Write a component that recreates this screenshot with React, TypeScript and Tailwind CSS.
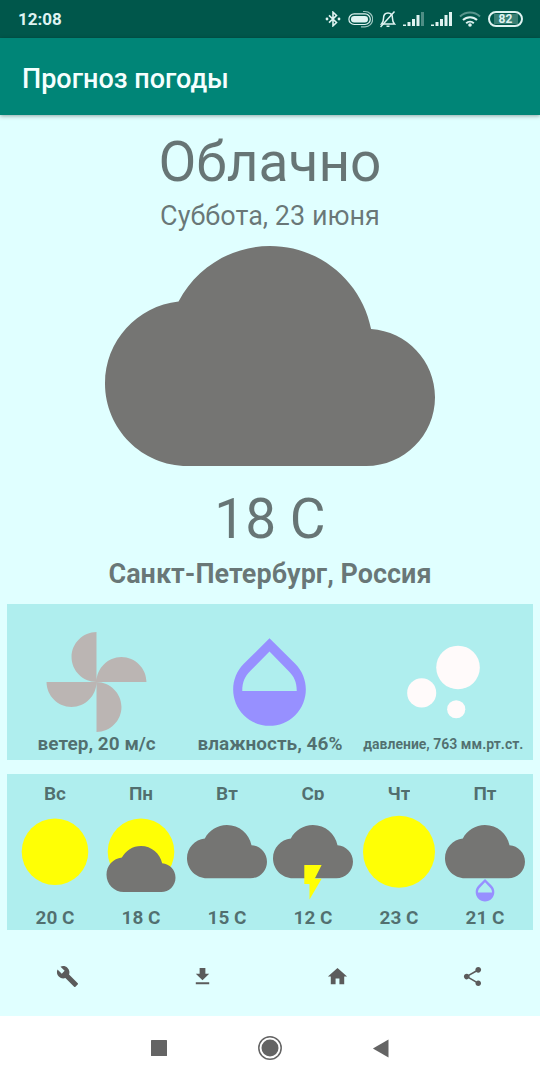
import type { ReactNode } from "react";

const CLOUD =
  "M19.35 10.04C18.67 6.59 15.64 4 12 4 9.11 4 6.6 5.64 5.35 8.04 2.34 8.36 0 10.91 0 14c0 3.31 2.69 6 6 6h13c2.76 0 5-2.24 5-5 0-2.64-2.05-4.78-4.65-4.96z";
const DROP =
  "M17.66 8L12 2.35 6.34 8C4.78 9.56 4 11.64 4 13.64s.78 4.11 2.34 5.67 3.61 2.35 5.66 2.35 4.1-.79 5.66-2.35S20 15.64 20 13.64 19.22 9.56 17.66 8zM6 14c.01-2 .62-3.27 1.76-4.4L12 5.27l4.24 4.38C17.38 10.77 17.99 12 18 14H6z";
const FAN =
  "M12 12c0-3 2.5-5.5 5.5-5.5S23 9 23 12H12zm0 0c0 3-2.5 5.5-5.5 5.5S1 15 1 12h11zm0 0c-3 0-5.5-2.5-5.5-5.5S9 1 12 1v11zm0 0c3 0 5.5 2.5 5.5 5.5S15 23 12 23V12z";
const BOLT = "M7 2v11h3v9l7-12h-4l4-8z";

function StatusBar() {
  return (
    <div className="flex h-[38px] items-center justify-between bg-[#00574b] pl-[18px] pr-[17px] text-[#dff3f1]">
      <time className="text-[17px] leading-5 font-bold">12:08</time>
      <div className="flex items-center gap-[7px]">
        <svg className="h-4 w-4" viewBox="0 0 16 16" fill="none" stroke="currentColor" strokeWidth="1.6" aria-label="Bluetooth">
          <path d="M4 4.3l7.5 7.2L8 14.8V1.2l3.5 3.3L4 11.7" />
          <circle cx="2" cy="8" r="1.4" fill="currentColor" stroke="none" />
          <circle cx="14" cy="8" r="1.4" fill="currentColor" stroke="none" />
        </svg>
        <svg className="h-[18px] w-[25px]" viewBox="0 0 25 18" fill="none" stroke="currentColor" aria-label="VPN">
          <rect x="3" y="6" width="17" height="6.5" rx="3.2" fill="currentColor" stroke="none" />
          <path d="M17 14.5H6.2a5.3 5.3 0 0 1 0-10.6H17a5.3 5.3 0 0 1 0 10.6" strokeWidth="1.2" />
          <path d="M15 1.5h2a7.4 7.4 0 0 1 0 15.3h-4" strokeWidth="1.2" opacity=".7" />
        </svg>
        <svg className="h-[18px] w-4" viewBox="1 0 16 18" fill="none" stroke="currentColor" strokeWidth="1.5" aria-label="Без звука">
          <path d="M2.5 14h13c-1.5-1.5-2-2.5-2-5.5C13.5 5 12 3 9 3S4.5 5 4.5 8.5c0 3-.5 4-2 5.5z" />
          <path d="M7.5 16.3h3M1.500 17l14-15.5" />
        </svg>
        <SignalBars weak />
        <SignalBars />
        <svg className="h-4 w-[22px]" viewBox="0 0 22 16" fill="none" stroke="currentColor" strokeWidth="2" aria-label="Wi-Fi">
          <path d="M1 5.500a14.500 14.500 0 0 1 20 0" opacity=".4" />
          <path d="M4 9a10 10 0 0 1 14 0M7.2 12.200a5.600 5.600 0 0 1 7.600 0" />
          <circle cx="11" cy="14" r="1.8" fill="currentColor" stroke="none" />
        </svg>
        <div className="flex h-4 w-[35px] items-center justify-center rounded-full border-2 border-current">
          <span className="w-6 bg-[#3a7f74] text-center text-[12px] leading-[10px] font-bold">82</span>
        </div>
      </div>
    </div>
  );
}

function SignalBars({ weak = false }: { weak?: boolean }) {
  return (
    <svg className="h-4 w-[21px]" viewBox="0 0 21 16" fill="currentColor" aria-label="Сигнал сети">
      <path d="M0 13.5h3V15H0zM4.5 11h3v4h-3zM9 8h3v7H9zM13.5 4h3v11h-3z" />
      <path d="M18 1h3v14h-3z" opacity={weak ? 0.35 : 1} />
    </svg>
  );
}

function Metric({ label, small = false, children }: { label: string; small?: boolean; children: ReactNode }) {
  return (
    <div className="flex min-w-0 flex-col items-center">
      <svg className="h-[100px] w-[109px]" viewBox="0 1 24 22">
        {children}
      </svg>
      <p className={`mt-px whitespace-nowrap leading-[22px] font-bold ${small ? "text-[14px]" : "text-[19px]"}`}>{label}</p>
    </div>
  );
}

type Sky = "sun" | "partly" | "cloud" | "storm" | "clear" | "rain";

function SkyIcon({ sky }: { sky: Sky }) {
  return (
    <svg className="mt-2 h-[98px] w-[86px]" viewBox="0 0 86 98">
      {(sky === "sun" || sky === "partly") && <circle cx="43" cy="43.7" r="33.3" fill="#ffff05" />}
      {sky === "clear" && <circle cx="43" cy="43.7" r="36" fill="#ffff05" />}
      {sky === "partly" && <path d={CLOUD} fill="#757573" transform="translate(8.5 26.5) scale(2.875)" />}
      {(sky === "cloud" || sky === "storm" || sky === "rain") && (
        <path d={CLOUD} fill="#757573" transform="translate(3 3.7) scale(3.333)" />
      )}
      {sky === "storm" && <path d={BOLT} fill="#ffff05" transform="translate(22.2 53.5) scale(1.73)" />}
      {sky === "rain" && <path d={DROP} fill="#9790ff" transform="translate(29 68.2) scale(1.167)" />}
    </svg>
  );
}

const days: { name: string; temp: string; sky: Sky }[] = [
  { name: "Вс", temp: "20 C", sky: "sun" },
  { name: "Пн", temp: "18 C", sky: "partly" },
  { name: "Вт", temp: "15 C", sky: "cloud" },
  { name: "Ср", temp: "12 C", sky: "storm" },
  { name: "Чт", temp: "23 C", sky: "clear" },
  { name: "Пт", temp: "21 C", sky: "rain" },
];

const actions = [
  {
    label: "Настройки",
    path: "M22.7 19l-9.1-9.1c.9-2.3.4-5-1.5-6.9-2-2-5-2.4-7.4-1.3L9 6 6 9 1.6 4.7C.4 7.1.9 10.1 2.9 12.1c1.9 1.9 4.6 2.4 6.9 1.5l9.1 9.1c.4.4 1 .4 1.4 0l2.3-2.3c.5-.4.5-1.1.1-1.4z",
  },
  { label: "Загрузить", path: "M19 9h-4V3H9v6H5l7 7 7-7zM5 18v2h14v-2H5z" },
  { label: "Главная", path: "M10 20v-6h4v6h5v-8h3L12 3 2 12h3v8z" },
  {
    label: "Поделиться",
    path: "M18 16.08c-.76 0-1.44.3-1.96.77L8.91 12.7c.05-.23.09-.46.09-.7s-.04-.47-.09-.7l7.05-4.11c.54.5 1.25.81 2.04.81 1.66 0 3-1.34 3-3s-1.34-3-3-3-3 1.34-3 3c0 .24.04.47.09.7L8.04 9.81C7.5 9.31 6.79 9 6 9c-1.66 0-3 1.34-3 3s1.34 3 3 3c.79 0 1.5-.31 2.04-.81l7.12 4.16c-.05.21-.08.43-.08.65 0 1.61 1.31 2.92 2.92 2.92 1.61 0 2.92-1.31 2.92-2.92s-1.31-2.92-2.92-2.92z",
  },
];

export default function App() {
  return (
    <div className="flex min-h-screen flex-col bg-[#e0ffff] font-['Roboto',sans-serif] text-black/54">
      <StatusBar />
      <header className="flex h-[77px] items-center bg-[#008577] px-[22px] pt-1 shadow-[0_1px_4px_rgba(0,0,0,0.35)]">
        <h1 className="text-[27px] leading-8 font-medium text-[#f5fffe]">Прогноз погоды</h1>
      </header>

      <main className="flex flex-1 flex-col px-[7px]">
        <section className="flex flex-col items-center pt-[15px] text-center">
          <h2 className="text-[55px] leading-16">Облачно</h2>
          <p className="mt-[6px] text-[27px] leading-8">Суббота, 23 июня</p>
          <svg className="mt-[14px] h-[220px] w-[330px]" viewBox="0 4 24 16">
            <path d={CLOUD} fill="#757573" />
          </svg>
          <p className="mt-[21px] text-[55px] leading-16">18 C</p>
          <p className="mt-[7px] text-[27px] leading-8 font-bold">Санкт-Петербург, Россия</p>
        </section>

        <section className="mt-[14px] grid grid-cols-3 bg-[#afeeee] px-[3px] pt-7 pb-[5px]">
          <Metric label="ветер, 20 м/с">
            <path d={FAN} fill="#bbb5b3" />
          </Metric>
          <Metric label="влажность, 46%">
            <path d={DROP} fill="#9790ff" />
          </Metric>
          <Metric label="давление, 763 мм.рт.ст." small>
            <g fill="#fffafa">
              <circle cx="7.2" cy="14.4" r="3.2" />
              <circle cx="14.8" cy="18" r="2" />
              <circle cx="15.2" cy="8.8" r="4.8" />
            </g>
          </Metric>
        </section>

        <section className="mt-[14px] grid grid-cols-6 bg-[#afeeee] px-[5px] pt-[9px] pb-px text-[19px] leading-[22px] font-bold">
          {days.map((day) => (
            <div key={day.name} className="flex flex-col items-center">
              <h3 className="h-[17px] overflow-hidden">{day.name}</h3>
              <SkyIcon sky={day.sky} />
              <p className="mt-px">{day.temp}</p>
            </div>
          ))}
        </section>
      </main>

      <nav className="grid grid-cols-4 pt-[6px]">
        {actions.map((action) => (
          <button key={action.label} type="button" aria-label={action.label} className="flex h-20 items-center justify-center">
            <svg className="h-[23px] w-[23px]" viewBox="0 0 24 24" fill="#5b5b5b">
              <path d={action.path} />
            </svg>
          </button>
        ))}
      </nav>

      <div className="flex h-16 items-center justify-center gap-[87px] bg-white text-[#646464]">
        <button type="button" aria-label="Недавние приложения" className="flex h-10 w-6 items-center justify-center">
          <svg className="h-4 w-4" viewBox="0 0 16 16" fill="currentColor">
            <rect width="16" height="16" rx=".5" />
          </svg>
        </button>
        <button type="button" aria-label="Домой" className="flex h-10 w-6 items-center justify-center">
          <svg className="h-6 w-6" viewBox="0 0 24 24" fill="currentColor">
            <circle cx="12" cy="12" r="11.2" fill="none" stroke="currentColor" strokeWidth="1.5" />
            <circle cx="12" cy="12" r="8.5" />
          </svg>
        </button>
        <button type="button" aria-label="Назад" className="flex h-10 w-6 items-center justify-center">
          <svg className="h-[19px] w-4" viewBox="0 0 16 19" fill="currentColor">
            <path d="M15.5.5v18L.3 9.8q-.5-.3 0-.6z" />
          </svg>
        </button>
      </div>
    </div>
  );
}
